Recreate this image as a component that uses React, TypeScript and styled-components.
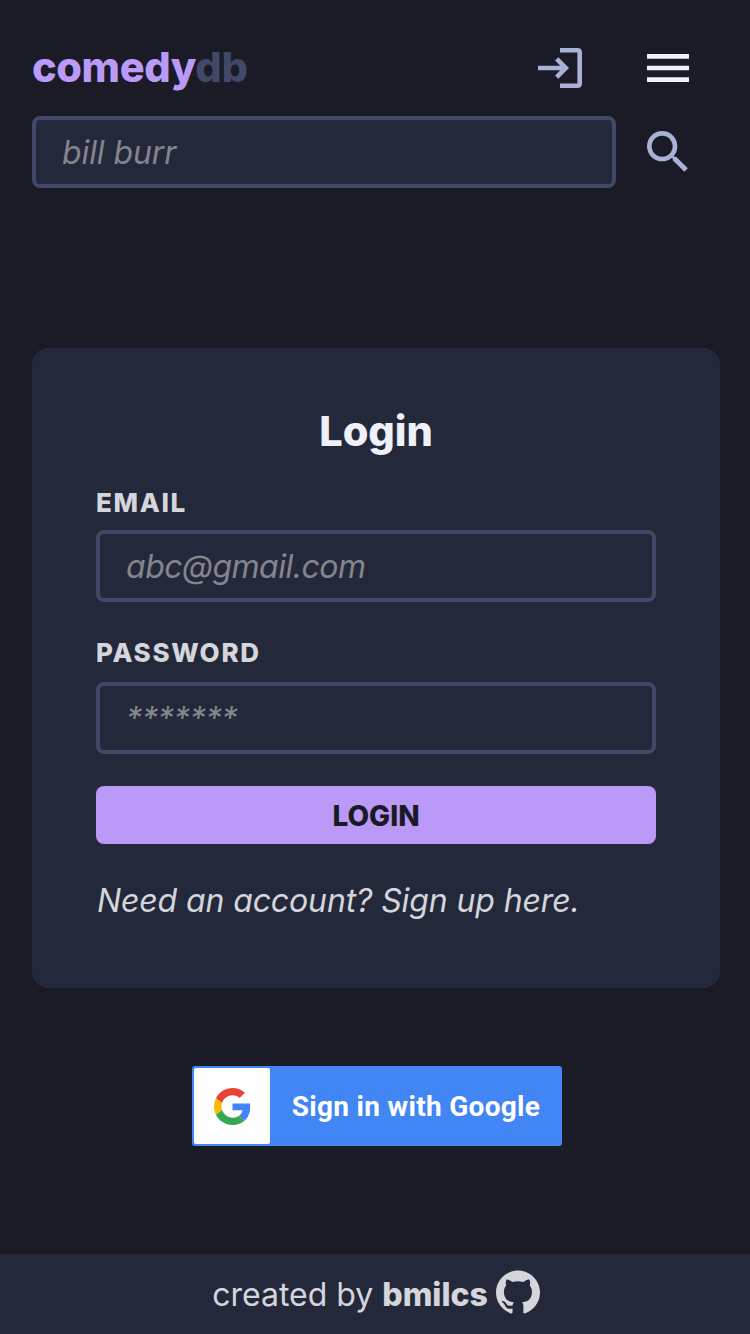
import React from "react";
import styled, { createGlobalStyle } from "styled-components";
import { MdMenu, MdSearch } from "react-icons/md";
import { SiGithub } from "react-icons/si";

const GlobalStyle = createGlobalStyle`
  *, *::before, *::after { box-sizing: border-box; }
  body { margin: 0; background: #1a1b26; color: #d5d6db; font-family: Inter, "Liberation Sans", sans-serif; font-size: 32px; font-weight: 400; }
  input, button { font: inherit; color: inherit; letter-spacing: inherit; margin: 0; }
  button { border: 0; background: none; padding: 0; cursor: pointer; }
`;

const Page = styled.div`
  display: flex;
  flex-direction: column;
  height: 1334px;
`;
const Header = styled.header`
  padding: 40px 32px 0;
`;
const TopBar = styled.div`
  display: flex;
  align-items: center;
  height: 56px;
  padding-right: 22px;
`;
const Logo = styled.a`
  flex: 1;
  font-size: 41.5px;
  font-weight: 800;
  line-height: 54px;
  padding-bottom: 2px;
  letter-spacing: -0.4px;
  color: #bb9af7;
`;
const LogoSuffix = styled.span`
  color: #414868;
`;
const IconButton = styled.button<{ $color: string; $gap?: number }>`
  display: flex;
  width: 56px;
  height: 56px;
  font-size: 56px;
  margin-left: ${(p) => p.$gap ?? 0}px;
  color: ${(p) => p.$color};
`;
const SearchBar = styled.form`
  display: flex;
  gap: 24px;
  margin-top: 20px;
`;
const Input = styled.input<{ $tracking?: number }>`
  width: 100%;
  height: 72px;
  padding: 0 26px;
  border: 4px solid #414868;
  border-radius: 8px;
  background: #24283b;
  outline: 0;
  letter-spacing: ${(p) => p.$tracking ?? -0.1}px;
  &::placeholder { color: #84858d; font-style: italic; opacity: 1; }
`;
const SearchInput = styled(Input)`
  width: 584px;
`;
const SearchIconSlot = styled.div`
  padding-top: 8px;
`;
const Card = styled.main`
  display: flex;
  flex-direction: column;
  width: 688px;
  height: 640px;
  margin: 160px 0 0 32px;
  padding: 55px 64px 0;
  border-radius: 16px;
  background: #24283b;
`;
const Title = styled.h1`
  margin: 0 0 25px;
  font-size: 41.5px;
  line-height: 56px;
  font-weight: 800;
  letter-spacing: -0.1px;
  text-align: center;
  color: #f0f0f8;
`;
const Label = styled.label<{ $top?: number; $bottom: number }>`
  margin: ${(p) => p.$top ?? 0}px 0 ${(p) => p.$bottom}px;
  font-size: 26px;
  line-height: 38px;
  font-weight: 800;
  letter-spacing: 1.7px;
`;
const Submit = styled.button`
  height: 58px;
  margin-top: 32px;
  padding-top: 2px;
  border-radius: 8px;
  background: #bb9af7;
  color: #1a1b26;
  font-size: 28px;
  font-weight: 800;
`;
const SignUp = styled.a`
  margin-top: 36px;
  padding-left: 1px;
  line-height: 42px;
  font-style: italic;
  letter-spacing: -0.12px;
`;
const GoogleButton = styled.button`
  display: flex;
  align-items: center;
  align-self: center;
  width: 370px;
  height: 80px;
  margin: 78px 0 0 4px;
  padding: 2px;
  border-radius: 3px;
  background: #4285f4;
  color: #fff;
  font-family: Roboto, sans-serif;
  font-size: 28px;
  font-weight: 700;
  letter-spacing: 0.3px;
`;
const GoogleMark = styled.span`
  display: grid;
  place-items: center;
  width: 76px;
  height: 76px;
  border-radius: 2px;
  background: #fff;
`;
const GoogleText = styled.span`
  flex: 1;
  padding-left: 2px;
  text-align: center;
  white-space: nowrap;
`;
const Footer = styled.footer`
  display: flex;
  justify-content: center;
  align-items: center;
  gap: 8px;
  height: 80px;
  margin-top: auto;
  padding-left: 2px;
  background: #24283b;
  svg { margin-bottom: 4px; }
`;
const Author = styled.b`
  font-weight: 800;
`;

const LoginIcon = () => (
  <svg width="56" height="56" viewBox="0 0 56 56" fill="none" stroke="currentColor" strokeWidth="4.6">
    <path d="M28 10.3h17.6q2.1 0 2.1 2.1v31.2q0 2.1-2.1 2.1H28" />
    <path d="M6 28h27M24.7 18.9l9.1 9.1-9.1 9.1" />
  </svg>
);

const GoogleIcon = () => (
  <svg width="37" height="37" viewBox="0 0 48 48">
    <path fill="#EA4335" d="M24 9.5c3.54 0 6.71 1.22 9.21 3.6l6.85-6.85C35.9 2.38 30.47 0 24 0 14.62 0 6.51 5.38 2.56 13.22l7.98 6.19C12.43 13.72 17.74 9.5 24 9.5z" />
    <path fill="#4285F4" d="M46.98 24.55c0-1.57-.15-3.09-.38-4.55H24v9.02h12.94c-.58 2.96-2.26 5.48-4.78 7.18l7.73 6c4.51-4.18 7.09-10.36 7.09-17.65z" />
    <path fill="#FBBC05" d="M10.53 28.59c-.48-1.45-.76-2.99-.76-4.59s.27-3.14.76-4.59l-7.98-6.19C.92 16.46 0 20.12 0 24c0 3.88.92 7.54 2.56 10.78l7.97-6.19z" />
    <path fill="#34A853" d="M24 48c6.48 0 11.93-2.13 15.89-5.81l-7.73-6c-2.15 1.45-4.92 2.3-8.16 2.3-6.26 0-11.57-4.22-13.47-9.91l-7.98 6.19C6.51 42.62 14.62 48 24 48z" />
  </svg>
);

export default function App() {
  return (
    <Page>
      <GlobalStyle />
      <Header>
        <TopBar>
          <Logo>comedy<LogoSuffix>db</LogoSuffix></Logo>
          <IconButton $color="#a9b1d6" aria-label="Log in"><LoginIcon /></IconButton>
          <IconButton $color="#f0f0f8" $gap={52} aria-label="Menu"><MdMenu /></IconButton>
        </TopBar>
        <SearchBar>
          <SearchInput placeholder="bill burr" />
          <SearchIconSlot>
            <IconButton type="button" $color="#a9b1d6" aria-label="Search"><MdSearch /></IconButton>
          </SearchIconSlot>
        </SearchBar>
      </Header>
      <Card>
        <Title>Login</Title>
        <Label $bottom={8}>EMAIL</Label>
        <Input placeholder="abc@gmail.com" $tracking={-0.5} />
        <Label $top={32} $bottom={10}>PASSWORD</Label>
        <Input type="password" placeholder="*******" />
        <Submit>LOGIN</Submit>
        <SignUp>Need an account? Sign up here.</SignUp>
      </Card>
      <GoogleButton>
        <GoogleMark><GoogleIcon /></GoogleMark>
        <GoogleText>Sign in with Google</GoogleText>
      </GoogleButton>
      <Footer>
        <span>created by <Author>bmilcs</Author></span>
        <SiGithub size={44} />
      </Footer>
    </Page>
  );
}
